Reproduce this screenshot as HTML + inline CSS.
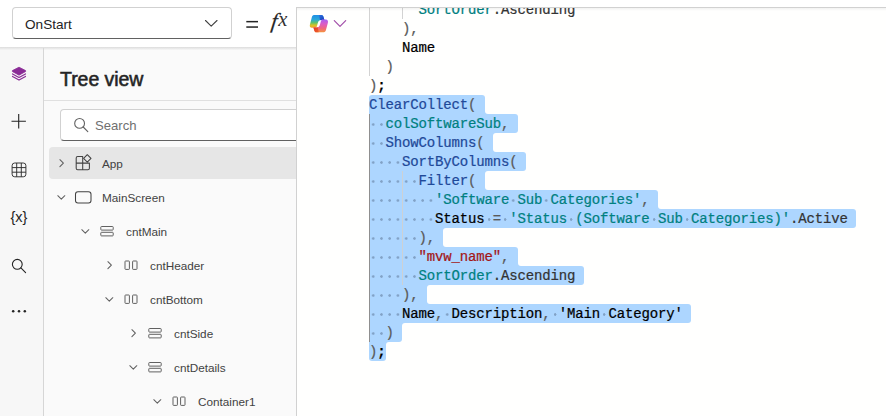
<!DOCTYPE html>
<html lang="en">
<head>
<meta charset="utf-8">
<title>Power Apps</title>
<style>
*{box-sizing:border-box;margin:0;padding:0}
html,body{width:886px;height:416px;overflow:hidden;background:#fff}
body{position:relative;font-family:"Liberation Sans",sans-serif;color:#242424}
.abs{position:absolute}
#lower{left:0;top:47px;width:886px;height:369px;background:#fafafa}
#rail{left:0;top:47px;width:43px;height:369px;background:#f7f7f7}
#railb{left:43px;top:47.6px;width:1px;height:369px;background:#d6d6d6}
#shadow{left:0;top:47px;width:297px;height:4px;background:linear-gradient(#dddddd 0,#e4e4e4 1px,rgba(236,236,236,0.8) 2px,rgba(250,250,250,0) 3.500px)}
#topbar{left:0;top:0;width:886px;height:47px;background:#fff}
#prop{left:12px;top:7px;width:220px;height:32px;border:1px solid #d1d1d1;border-bottom-color:#616161;border-radius:4px;background:#fff}
#prop span{position:absolute;left:12px;top:1.5px;line-height:30px;font-size:13.6px;color:#242424}
#title{left:60px;top:63.6px;font-size:19.5px;font-weight:normal;-webkit-text-stroke:0.55px #242424;line-height:30px;color:#242424;letter-spacing:-0.05px}
#sep{left:44px;top:100px;width:253px;height:1px;background:#e0e0e0}
#search{left:60px;top:109px;width:260px;height:32px;border:1px solid #d1d1d1;border-bottom-color:#616161;border-radius:4px;background:#fff}
#search span{position:absolute;left:34px;top:0.6px;line-height:30px;font-size:13.1px;color:#707070}
#hl{left:49px;top:147px;width:260px;height:32px;border-radius:4px;background:#e6e6e6}
.row{position:absolute;height:34px;line-height:34px;margin-top:0.8px;font-size:11.75px;color:#424242;white-space:nowrap}
#panel{left:296px;top:7px;width:600px;height:420px;background:#fffffe;border:1px solid #d1d1d1;overflow:hidden}
#panelshadow{left:297px;top:8px;width:600px;height:3px;background:linear-gradient(rgba(0,0,0,0.05),rgba(0,0,0,0))}
#code{position:absolute;left:72px;top:-8px;width:600px;height:420px;font-family:"Liberation Mono",monospace;font-size:14px;letter-spacing:-0.15px}
.ln{position:absolute;left:0;height:19px;-webkit-text-stroke:0.22px currentColor;line-height:19px;white-space:pre;color:#000;margin-top:1px}
.sel{position:absolute;left:0;height:19px;background:#add6ff}
.cc{position:absolute;width:3px;height:19px;background:#add6ff}.cc i{display:block;width:3px;height:19px;background:#fffffe}
.g{position:absolute;width:1px;background:#d3d3d3}
.gs{background:#8f8f8f}
.gs2{background:#cdd1d4}
.f{color:#1f4999}.t{color:#008080}.s{color:#a31515}.k{color:#000}.b{color:#000;font-weight:bold}.p{color:#5a5a5a}.d{color:#333}
.w{display:inline-block;height:19px;vertical-align:top;background-image:radial-gradient(circle at 4.2px 9.5px,rgba(70,90,120,0.42) 0.95px,rgba(70,90,120,0) 1.6px);background-size:8.2514px 19px;background-position:0 0}
svg{position:absolute;overflow:visible}
</style>
</head>
<body>
<div id="lower" class="abs"></div>
<div id="rail" class="abs"></div>
<div id="topbar" class="abs"></div>
<div id="shadow" class="abs"></div>
<div id="railb" class="abs"></div>

<!-- property dropdown -->
<div id="prop" class="abs"><span>OnStart</span></div>
<svg style="left:0;top:0" width="886" height="48" viewBox="0 0 886 48">
  <path d="M205.5 20.5 L211.2 26.2 L217 20.5" fill="none" stroke="#424242" stroke-width="1.1" stroke-linecap="round" stroke-linejoin="round"/>
  <rect x="246.3" y="20.9" width="11.7" height="1.5" fill="#242424"/>
  <rect x="246.3" y="26.3" width="11.7" height="1.5" fill="#242424"/>
  <text x="0" y="0" transform="translate(270.6 28) skewX(-8)" font-family="Liberation Serif, serif" font-style="italic" font-size="21.5" fill="#242424" stroke="#242424" stroke-width="0.25">f</text>
  <text x="278.2" y="26" font-family="Liberation Serif, serif" font-style="italic" font-size="20.5" fill="#333">x</text>
</svg>

<!-- rail icons -->
<svg style="left:0;top:47px" width="44" height="369" viewBox="0 47 44 369">
  <g fill="#8a2b96" stroke="none">
    <path d="M19 67.2 L25.6 70.6 L25.6 71.5 L19 75.2 L12.400 71.500 L12.400 70.600 Z" stroke="#8a2b96" stroke-width="0.8" stroke-linejoin="round"/>
  </g>
  <path d="M12.5 73.900 L19 77.500 L25.500 73.900 M12.500 76.400 L19 80.100 L25.500 76.400" fill="none" stroke="#8a2b96" stroke-width="1.15" stroke-linejoin="round" stroke-linecap="round"/>
  <path d="M18.7 114 V128.4 M11.5 121.2 H25.9" fill="none" stroke="#242424" stroke-width="1.1"/>
  <g fill="none" stroke="#2e2e2e" stroke-width="0.95">
    <rect x="12.1" y="163" width="13.8" height="13.8" rx="2.6"/>
    <path d="M16.7 163 V176.8 M21.3 163 V176.8 M12.1 167.6 H25.9 M12.1 172.2 H25.9"/>
  </g>
  <text x="19" y="221.8" text-anchor="middle" font-family="Liberation Sans, sans-serif" font-size="14.5" fill="#242424">{x}</text>
  <g fill="none" stroke="#242424" stroke-width="1.1" stroke-linecap="round">
    <circle cx="17.3" cy="264.3" r="4.9"/>
    <path d="M20.9 267.9 L25.6 272.6"/>
  </g>
  <g fill="#242424"><circle cx="13.2" cy="311.2" r="1.25"/><circle cx="19" cy="311.2" r="1.25"/><circle cx="24.8" cy="311.2" r="1.25"/></g>
</svg>

<!-- tree view -->
<div id="title" class="abs">Tree view</div>
<div id="sep" class="abs"></div>
<div id="search" class="abs"><span>Search</span></div>
<div id="hl" class="abs"></div>
<svg style="left:44px;top:100px" width="253" height="316" viewBox="44 100 253 316">
  <g fill="none" stroke="#616161" stroke-width="1.1" stroke-linecap="round">
    <circle cx="79.6" cy="123.4" r="4.9"/><path d="M83.2 127 L87.8 131.6"/>
  </g>
  <g fill="none" stroke="#616161" stroke-width="1.05" stroke-linecap="round" stroke-linejoin="round">
    <!-- chevrons -->
    <path d="M59.9 159.7 L63.4 163.2 L59.9 166.7"/>
    <path d="M57.8 195.7 L61.3 199.2 L64.8 195.7"/>
    <path d="M81.8 229.7 L85.3 233.2 L88.8 229.7"/>
    <path d="M107.9 261.7 L111.4 265.2 L107.9 268.7"/>
    <path d="M105.8 297.7 L109.3 301.2 L112.8 297.7"/>
    <path d="M131.9 329.7 L135.4 333.2 L131.9 336.7"/>
    <path d="M129.8 365.7 L133.3 369.2 L136.8 365.7"/>
    <path d="M153.8 399.7 L157.3 403.2 L160.8 399.7"/>
  </g>
  <g fill="none" stroke="#424242" stroke-width="1.05" stroke-linejoin="round">
    <!-- App icon -->
    <path d="M76.2 158 a1.5 1.5 0 0 1 1.5 -1.5 h5 v13.2 h-5 a1.5 1.5 0 0 1 -1.500 -1.500 z M76.2 163.1 h13.2 v5.100 a1.5 1.5 0 0 1 -1.500 1.500 h-5.200"/>
    <path d="M87.3 154.700 L91 158.400 L87.300 162.100 L83.600 158.400 Z" fill="#e6e6e6"/>
    <!-- screen icon -->
    <rect x="75.5" y="191.7" width="15.5" height="11.3" rx="2.5"/>
  </g>
  <g fill="none" stroke="#616161" stroke-width="1">
    <!-- vertical containers -->
    <rect x="100.8" y="226.5" width="12.4" height="3.6" rx="0.7"/><rect x="100.8" y="232.3" width="12.4" height="3.6" rx="0.7"/>
    <rect x="148.8" y="328.5" width="12.4" height="3.6" rx="0.7"/><rect x="148.8" y="334.3" width="12.4" height="3.6" rx="0.7"/>
    <rect x="148.8" y="362.5" width="12.4" height="3.6" rx="0.7"/><rect x="148.8" y="368.3" width="12.4" height="3.6" rx="0.7"/>
    <!-- horizontal containers -->
    <rect x="125" y="261" width="4.4" height="8.4" rx="0.6"/><rect x="132.6" y="261" width="4.4" height="8.4" rx="0.6"/>
    <rect x="125" y="295" width="4.4" height="8.4" rx="0.6"/><rect x="132.6" y="295" width="4.4" height="8.4" rx="0.6"/>
    <rect x="173" y="397" width="4.4" height="8.4" rx="0.6"/><rect x="180.6" y="397" width="4.4" height="8.4" rx="0.6"/>
  </g>
</svg>
<div class="row" style="left:102px;top:146px">App</div>
<div class="row" style="left:102px;top:180px">MainScreen</div>
<div class="row" style="left:126px;top:214px">cntMain</div>
<div class="row" style="left:150px;top:248px">cntHeader</div>
<div class="row" style="left:150px;top:282px">cntBottom</div>
<div class="row" style="left:174px;top:316px">cntSide</div>
<div class="row" style="left:174px;top:350px">cntDetails</div>
<div class="row" style="left:198px;top:384px">Container1</div>

<!-- formula panel -->
<div id="panel" class="abs">
<div id="code">
<div class="sel" style="top:95px;width:115.50px;border-radius:3px 3px 0px 0px"></div>
<div class="cc" style="top:95px;left:115.50px"><i style="border-radius:0px 0 0 3px"></i></div>
<div class="sel" style="top:114px;width:148.50px;border-radius:0px 3px 3px 0px"></div>
<div class="sel" style="top:133px;width:123.75px;border-radius:0px 0px 0px 0px"></div>
<div class="cc" style="top:133px;left:123.75px"><i style="border-radius:3px 0 0 3px"></i></div>
<div class="sel" style="top:152px;width:156.75px;border-radius:0px 3px 3px 0px"></div>
<div class="sel" style="top:171px;width:115.50px;border-radius:0px 0px 0px 0px"></div>
<div class="cc" style="top:171px;left:115.50px"><i style="border-radius:3px 0 0 3px"></i></div>
<div class="sel" style="top:190px;width:288.75px;border-radius:0px 3px 0px 0px"></div>
<div class="cc" style="top:190px;left:288.75px"><i style="border-radius:0px 0 0 3px"></i></div>
<div class="sel" style="top:209px;width:486.75px;border-radius:0px 3px 3px 0px"></div>
<div class="sel" style="top:228px;width:74.25px;border-radius:0px 0px 0px 0px"></div>
<div class="cc" style="top:228px;left:74.25px"><i style="border-radius:3px 0 0 3px"></i></div>
<div class="sel" style="top:247px;width:148.50px;border-radius:0px 3px 0px 0px"></div>
<div class="cc" style="top:247px;left:148.50px"><i style="border-radius:0px 0 0 3px"></i></div>
<div class="sel" style="top:266px;width:214.50px;border-radius:0px 3px 3px 0px"></div>
<div class="sel" style="top:285px;width:57.75px;border-radius:0px 0px 0px 0px"></div>
<div class="cc" style="top:285px;left:57.75px"><i style="border-radius:3px 0 0 3px"></i></div>
<div class="sel" style="top:304px;width:321.75px;border-radius:0px 3px 3px 0px"></div>
<div class="sel" style="top:323px;width:33.00px;border-radius:0px 0px 3px 0px"></div>
<div class="cc" style="top:323px;left:33.00px"><i style="border-radius:3px 0 0 0px"></i></div>
<div class="sel" style="top:342px;width:16.50px;border-radius:0px 0px 3px 3px"></div>
<div class="cc" style="top:342px;left:16.50px"><i style="border-radius:3px 0 0 0px"></i></div>
<div class="g" style="left:0.00px;top:0px;height:76px"></div>
<div class="g" style="left:33.00px;top:0px;height:19px"></div>
<div class="g gs" style="left:0.00px;top:114px;height:228px"></div>
<div class="g gs2" style="left:33.00px;top:171px;height:114px"></div>
<div class="ln" style="top:0px">      <span class="t">SortOrder</span><span class="d">.Ascending</span></div>
<div class="ln" style="top:19px">    <span class="p">),</span></div>
<div class="ln" style="top:38px">    <span class="k">Name</span></div>
<div class="ln" style="top:57px">  <span class="p">)</span></div>
<div class="ln" style="top:76px"><span class="p">)</span><span class="b">;</span></div>
<div class="ln" style="top:95px"><span class="f">ClearCollect</span><span class="p">(</span></div>
<div class="ln" style="top:114px"><span class="w">  </span><span class="t">colSoftwareSub</span><span class="p">,</span></div>
<div class="ln" style="top:133px"><span class="w">  </span><span class="f">ShowColumns</span><span class="p">(</span></div>
<div class="ln" style="top:152px"><span class="w">    </span><span class="f">SortByColumns</span><span class="p">(</span></div>
<div class="ln" style="top:171px"><span class="w">      </span><span class="f">Filter</span><span class="p">(</span></div>
<div class="ln" style="top:190px"><span class="w">        </span><span class="t">'Software<span class="w"> </span>Sub<span class="w"> </span>Categories'</span><span class="p">,</span></div>
<div class="ln" style="top:209px"><span class="w">        </span><span class="k">Status</span><span class="w"> </span><span class="p">=</span><span class="w"> </span><span class="t">'Status<span class="w"> </span>(Software<span class="w"> </span>Sub<span class="w"> </span>Categories)'</span><span class="d">.Active</span></div>
<div class="ln" style="top:228px"><span class="w">      </span><span class="p">),</span></div>
<div class="ln" style="top:247px"><span class="w">      </span><span class="s">"mvw_name"</span><span class="p">,</span></div>
<div class="ln" style="top:266px"><span class="w">      </span><span class="t">SortOrder</span><span class="d">.Ascending</span></div>
<div class="ln" style="top:285px"><span class="w">    </span><span class="p">),</span></div>
<div class="ln" style="top:304px"><span class="w">    </span><span class="k">Name</span><span class="p">,</span><span class="w"> </span><span class="k">Description</span><span class="p">,</span><span class="w"> </span><span class="k">'Main<span class="w"> </span>Category'</span></div>
<div class="ln" style="top:323px"><span class="w">  </span><span class="p">)</span></div>
<div class="ln" style="top:342px"><span class="p">)</span><span class="b">;</span></div>
</div>
</div>
<div id="panelshadow" class="abs"></div>
<svg style="left:296px;top:7px" width="80" height="40" viewBox="296 7 80 40">
  <defs>
    <linearGradient id="cg1" x1="0" y1="0" x2="0" y2="1">
      <stop offset="0" stop-color="#1f8fe6"/><stop offset="0.35" stop-color="#2aa7d8"/><stop offset="0.6" stop-color="#5cc36a"/><stop offset="0.8" stop-color="#d8c327"/><stop offset="1" stop-color="#f0a02a"/>
    </linearGradient>
    <linearGradient id="cg2" x1="0" y1="0" x2="0" y2="1">
      <stop offset="0" stop-color="#f5963c"/><stop offset="0.3" stop-color="#f0687c"/><stop offset="0.65" stop-color="#dc5cc4"/><stop offset="1" stop-color="#a860f2"/>
    </linearGradient>
    <linearGradient id="cg4" x1="0" y1="0" x2="1" y2="1">
      <stop offset="0" stop-color="#f0602a"/><stop offset="1" stop-color="#e03a24"/>
    </linearGradient>
    <linearGradient id="cg3" x1="0" y1="0" x2="1" y2="1">
      <stop offset="0" stop-color="#2a6fe0"/><stop offset="1" stop-color="#1b3fb8"/>
    </linearGradient>
  </defs>
  <g transform="translate(309.7 14.8)">
    <path d="M4.2 0.3 L11.5 0.3 C12.8 0.3 13.4 1 13.8 2.2 L14.7 5.2 L11.6 5.2 C9.6 5.2 8.6 6.4 8.1 8.2 L7.3 11.2 C6.9 12.5 6.2 13 4.9 13 L2.2 13 C0.6 13 -0.3 11.600 0.2 9.900 L2 3 C2.400 1.300 3.200 0.3 4.200 0.3 Z" fill="url(#cg1)"/>
    <path d="M9.4 0.3 L11.5 0.3 C12.8 0.3 13.4 1 13.8 2.2 L14.7 5.2 L11.6 5.2 C11.1 5.2 10.700 5.300 10.300 5.400 Z" fill="url(#cg3)"/>
    <g transform="rotate(180 9.2 8.9)">
    <path d="M4.2 0.3 L11.5 0.3 C12.8 0.3 13.4 1 13.8 2.2 L14.7 5.2 L11.6 5.2 C9.6 5.2 8.6 6.4 8.1 8.2 L7.3 11.2 C6.9 12.5 6.2 13 4.9 13 L2.2 13 C0.6 13 -0.3 11.600 0.2 9.900 L2 3 C2.400 1.300 3.200 0.3 4.200 0.3 Z" fill="url(#cg2)"/>
    <path d="M9.4 0.3 L11.5 0.3 C12.8 0.3 13.4 1 13.8 2.2 L14.7 5.2 L11.6 5.2 C11.1 5.2 10.700 5.300 10.300 5.400 Z" fill="url(#cg4)"/>
    </g>
  </g>
  <path d="M334.300 20.600 L340 26.300 L345.700 20.600" fill="none" stroke="#a14da8" stroke-width="1.2" stroke-linecap="round" stroke-linejoin="round"/>
</svg>
</body>
</html>
